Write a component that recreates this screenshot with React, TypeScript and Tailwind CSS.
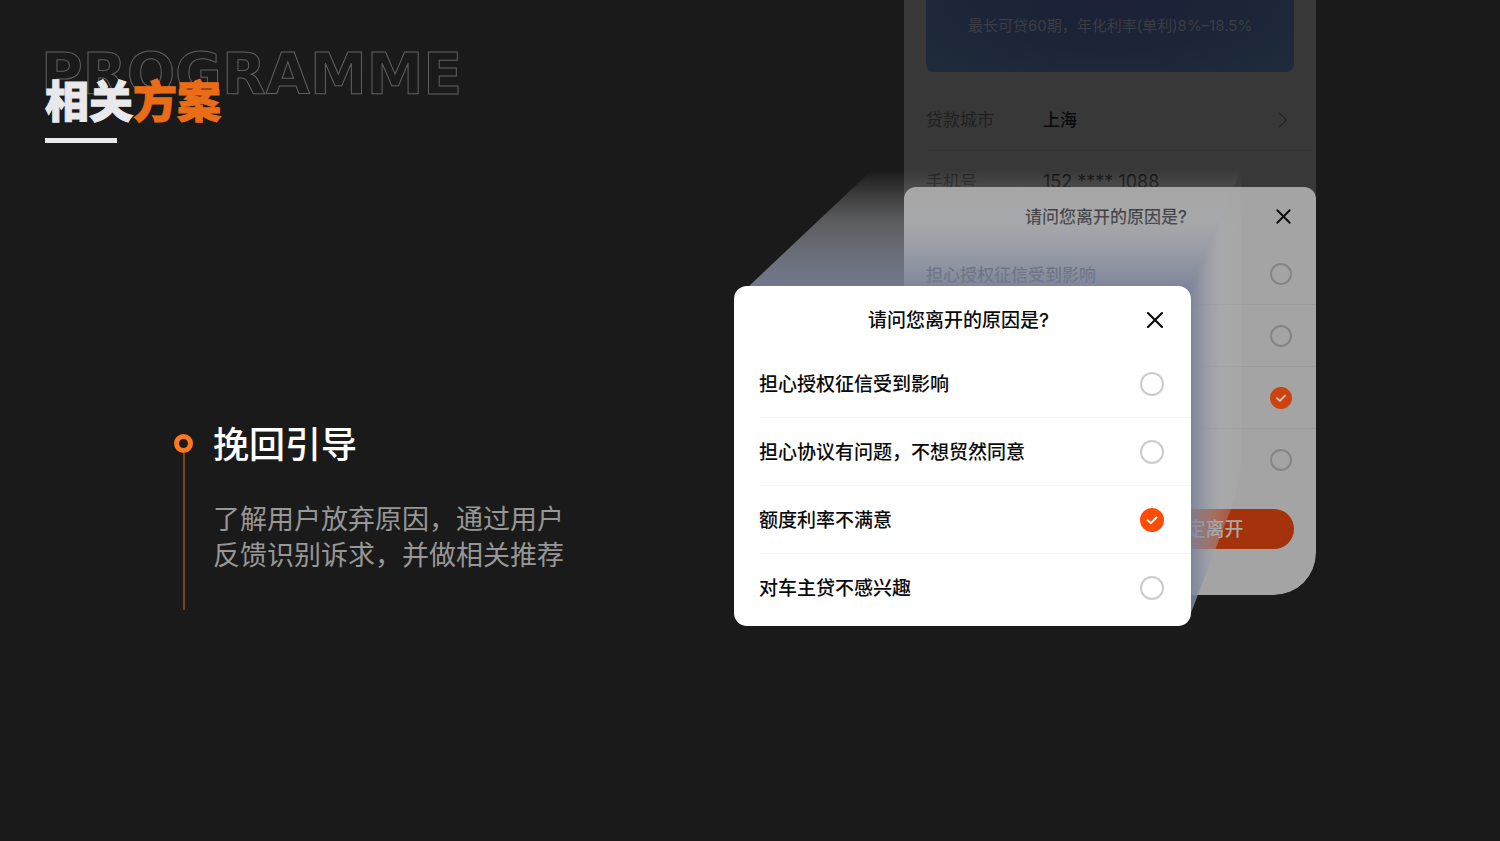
import { ChevronRight, X } from "lucide-react";

const reasons = [
  "担心授权征信受到影响",
  "担心协议有问题，不想贸然同意",
  "额度利率不满意",
  "对车主贷不感兴趣",
];
const picked = 2;

function CheckMark({ size, color }: { size: number; color: string }) {
  return (
    <svg
      width={size}
      height={size}
      viewBox="0 0 24 24"
      fill="none"
      className="pointer-events-none absolute inset-0 opacity-0 peer-checked:opacity-100"
    >
      <path
        d="M7.6 12.2l3.2 2.9 5.6-5.6"
        stroke={color}
        strokeWidth="2"
        strokeLinecap="round"
        strokeLinejoin="round"
      />
    </svg>
  );
}

// the dialog shown in front at full brightness
function ReasonCard() {
  return (
    <form className="absolute left-0 top-[286px] w-[457px] rounded-[13px] bg-white pb-1 text-[19px] font-medium text-[#0a0a0a]">
      <div className="relative flex h-16 items-center justify-center pt-1.5">
        <h3 className="pr-2">请问您离开的原因是?</h3>
        <button type="button" aria-label="关闭" className="absolute right-[22px] top-5">
          <X size={28} strokeWidth={1.8} />
        </button>
      </div>
      <ul className="pl-[25px]">
        {reasons.map((reason, index) => (
          <li key={reason} className="border-b border-[#f5f5f5] last:border-transparent">
            <label className="flex h-[67px] items-center justify-between pr-[27px]">
              <span className="pt-1">{reason}</span>
              <span className="relative size-6">
                <input
                  type="radio"
                  name="reason"
                  defaultChecked={index === picked}
                  className="peer block size-full appearance-none rounded-full border-2 border-[#cbcbcb] checked:border-[#ff4c05] checked:bg-[#ff4c05]"
                />
                <CheckMark size={24} color="#fff" />
              </span>
            </label>
          </li>
        ))}
      </ul>
    </form>
  );
}

// same dialog, dimmed, still sitting inside the phone
function PhoneSheet() {
  return (
    <form className="absolute inset-x-0 top-[187px] h-[408px] rounded-t-xl rounded-br-[42px] bg-[#a4a4a4] text-[17px] text-[#222]">
      <div className="relative flex h-14 items-center justify-center pt-1.5">
        <h3 className="pr-2 font-medium text-black">请问您离开的原因是?</h3>
        <button type="button" aria-label="关闭" className="absolute right-5 top-[17px] text-[#0c0c0c]">
          <X size={25} strokeWidth={1.8} />
        </button>
      </div>
      <ul className="pl-[22px]">
        {reasons.map((reason, index) => (
          <li key={reason} className="border-b border-[#9c9c9c] last:border-transparent">
            <label className="flex h-[61px] items-center pr-6">
              {index === 0 && <span className="pt-1 font-medium">{reason}</span>}
              <span className="relative ml-auto size-[22px]">
                <input
                  type="radio"
                  name="sheet-reason"
                  aria-label={reason}
                  defaultChecked={index === picked}
                  className="peer block size-full appearance-none rounded-full border-2 border-[#858585] checked:border-[#cd430d] checked:bg-[#cd430d]"
                />
                <CheckMark size={22} color="#d0c8c4" />
              </span>
            </label>
          </li>
        ))}
      </ul>
      <div className="flex justify-end px-[22px] pt-[18px]">
        <button type="button" className="h-10 w-[177px] rounded-full bg-[#a4330b] pt-0.5 text-[19px] font-medium text-[#a9a9a9]">
          确定离开
        </button>
      </div>
    </form>
  );
}

function Phone() {
  return (
    <div className="relative ml-[170px] h-[595px] overflow-hidden rounded-br-[42px] bg-[#383838] text-[17px] text-[#202020]">
      <div className="mx-[22px] h-[72px] rounded-b-lg bg-[radial-gradient(ellipse_at_top,#1b2037_0%,#1c2538_50%,#1f2b3a_100%)] pt-4 text-center text-[15px] leading-5 text-[#3b3d44]">
        最长可贷60期，年化利率(单利)8%–18.5%
      </div>
      <dl className="pl-[22px] pt-[17px]">
        <div className="flex h-[62px] items-center border-b border-[#353535]">
          <dt className="w-[117px] pt-0.5">贷款城市</dt>
          <dd className="flex-1 pt-0.5 font-medium text-[#0a0a0a]">上海</dd>
          <ChevronRight size={26} strokeWidth={1.6} className="mr-5 text-[#262626]" />
        </div>
        <div className="flex h-[62px] items-center">
          <dt className="w-[117px] pt-0.5">手机号</dt>
          <dd className="text-lg text-[#101010]">152 **** 1088</dd>
        </div>
      </dl>
      <PhoneSheet />
    </div>
  );
}

// beam of light between the phone and the front card
function Beam() {
  return (
    <svg className="pointer-events-none absolute left-0 top-[170px]" width="520" height="450" viewBox="0 0 520 450">
      <defs>
        <linearGradient id="beam-top" gradientUnits="userSpaceOnUse" x1="0" y1="0" x2="0" y2="117">
          <stop offset="0" stopColor="#b4b4b4" stopOpacity="0" />
          <stop offset="0.4" stopColor="#adaeb3" stopOpacity="0.42" />
          <stop offset="0.7" stopColor="#9197a6" stopOpacity="0.66" />
          <stop offset="1" stopColor="#7a8299" stopOpacity="0.9" />
        </linearGradient>
        <linearGradient id="beam-side" gradientUnits="userSpaceOnUse" x1="457" y1="0" x2="507" y2="0">
          <stop offset="0" stopColor="#7a8299" stopOpacity="0.9" />
          <stop offset="0.3" stopColor="#9197a6" stopOpacity="0.66" />
          <stop offset="0.6" stopColor="#adaeb3" stopOpacity="0.42" />
          <stop offset="1" stopColor="#b4b4b4" stopOpacity="0.2" />
        </linearGradient>
        <linearGradient id="beam-fade" gradientUnits="userSpaceOnUse" x1="0" y1="0" x2="0" y2="60">
          <stop offset="0" stopColor="#fff" stopOpacity="0" />
          <stop offset="1" stopColor="#fff" />
        </linearGradient>
        <mask id="beam-mask" maskUnits="userSpaceOnUse" x="0" y="0" width="520" height="450">
          <rect width="520" height="450" fill="url(#beam-fade)" />
        </mask>
      </defs>
      <path d="M14 117L138 0H507L457 117V135H430V117Z" fill="url(#beam-top)" />
      <path
        d="M457 117L507 0V290Q507 312 498 336L457 443Z"
        fill="url(#beam-side)"
        mask="url(#beam-mask)"
      />
    </svg>
  );
}

export default function App() {
  return (
    <main
      lang="zh-CN"
      className="flex min-h-screen justify-between bg-[#1a1a1a] pl-[45px] pr-[184px] font-['Inter','Noto_Sans_CJK_SC',sans-serif]"
    >
      <section className="pt-[42px]">
        <header>
          <p
            aria-hidden="true"
            className="-ml-1 font-['DejaVu_Sans',sans-serif] text-[57px] font-bold leading-[64px] text-transparent [-webkit-text-stroke:1px_#606060]"
          >
            PROGRAMME
          </p>
          <h1 className="relative -mt-8 text-[44px] font-black leading-[56px] text-[#e9e8ea] [-webkit-text-stroke:1px_currentColor]">
            相关<span className="text-[#ea6c17]">方案</span>
          </h1>
          <div className="mt-2 h-[5px] w-[72px] bg-[#e9e8ea]" />
        </header>
        <article className="ml-[129px] mt-[277px] flex gap-5">
          <div className="flex flex-col items-center pt-[14px]">
            <span className="size-[19px] rounded-full border-[5px] border-[#fb7820]" />
            <span className="w-0.5 flex-1 bg-[#7c4319]" />
          </div>
          <div className="pb-9">
            <h2 className="text-4xl font-medium leading-[50px] text-white">挽回引导</h2>
            <p className="mt-8 text-[27px] font-normal leading-9 text-[#979797]">
              了解用户放弃原因，通过用户
              <br />
              反馈识别诉求，并做相关推荐
            </p>
          </div>
        </article>
      </section>
      <section className="relative w-[582px] shrink-0">
        <Phone />
        <Beam />
        <ReasonCard />
      </section>
    </main>
  );
}
